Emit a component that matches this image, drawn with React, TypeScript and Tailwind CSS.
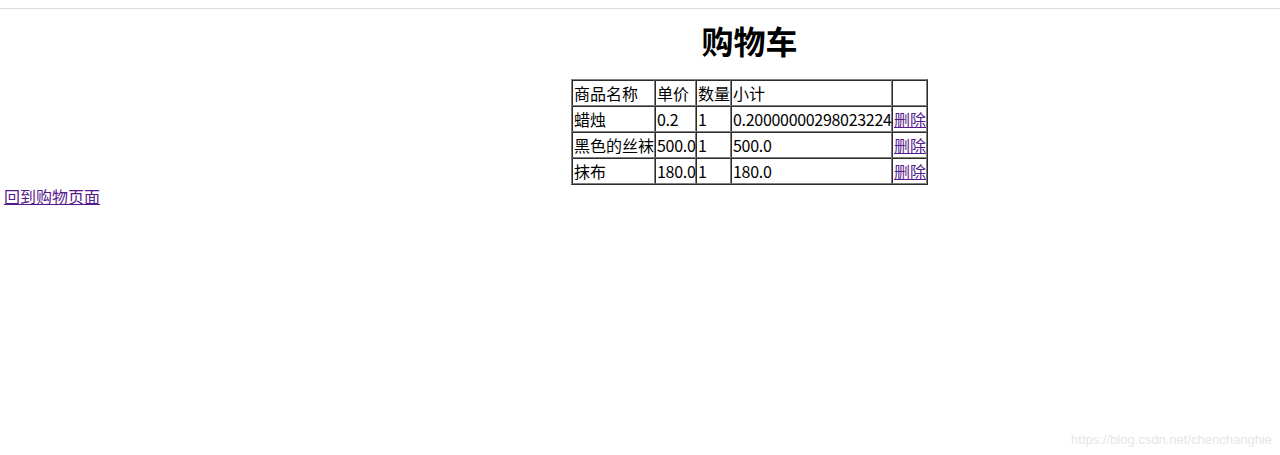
import React from "react";

const rows = [
  { name: "蜡烛", price: "0.2", qty: "1", sub: "0.20000000298023224" },
  { name: "黑色的丝袜", price: "500.0", qty: "1", sub: "500.0" },
  { name: "抹布", price: "180.0", qty: "1", sub: "180.0" },
];

const cell =
  "[border-style:inset] border border-[#808080] p-[1px] text-left font-normal whitespace-nowrap h-[26px] leading-[22px] align-middle overflow-visible";
const num = " tracking-[-0.3px]";

export default function App() {
  return (
    <div className="w-[1280px] h-[455px] bg-white text-black font-['Noto_Sans_CJK_SC','Microsoft_YaHei',sans-serif] text-[16px] relative overflow-hidden">
      <div className="h-[8px]" />
      <div className="h-[1px] bg-[#dcdcdc]" />
      <div className="pl-[219px]">
        <h1 className="h-[46px] mt-[8px] text-center text-[32px] font-bold leading-[46px]">购物车</h1>
        <div className="mt-[16px] flex justify-center">
          <table className="table-fixed w-[357px] border-separate border-spacing-0 border border-[#808080] [border-style:outset]">
            <thead>
              <tr>
                <th className={cell + " w-[83px]"}>商品名称</th>
                <th className={cell + " w-[41px]"}>单价</th>
                <th className={cell + " w-[35px]"}>数量</th>
                <th className={cell + " w-[161px]"}>小计</th>
                <th className={cell + " w-[35px]"}></th>
              </tr>
            </thead>
            <tbody>
              {rows.map((r) => (
                <tr key={r.name}>
                  <td className={cell}>{r.name}</td>
                  <td className={cell + num}>{r.price}</td>
                  <td className={cell + num}>{r.qty}</td>
                  <td className={cell + num}>{r.sub}</td>
                  <td className={cell}>
                    <a href="#" className="text-[#551a8b] underline">删除</a>
                  </td>
                </tr>
              ))}
            </tbody>
          </table>
        </div>
      </div>
      <div className="pl-[4px] -mt-[1px] leading-[24px]">
        <a href="#" className="text-[#551a8b] underline">回到购物页面</a>
      </div>
      <div className="absolute right-[8px] bottom-[6px] text-[13px] text-[#e6e6e6] font-['Liberation_Sans',sans-serif]">
        https://blog.csdn.net/chenchanghie
      </div>
    </div>
  );
}
